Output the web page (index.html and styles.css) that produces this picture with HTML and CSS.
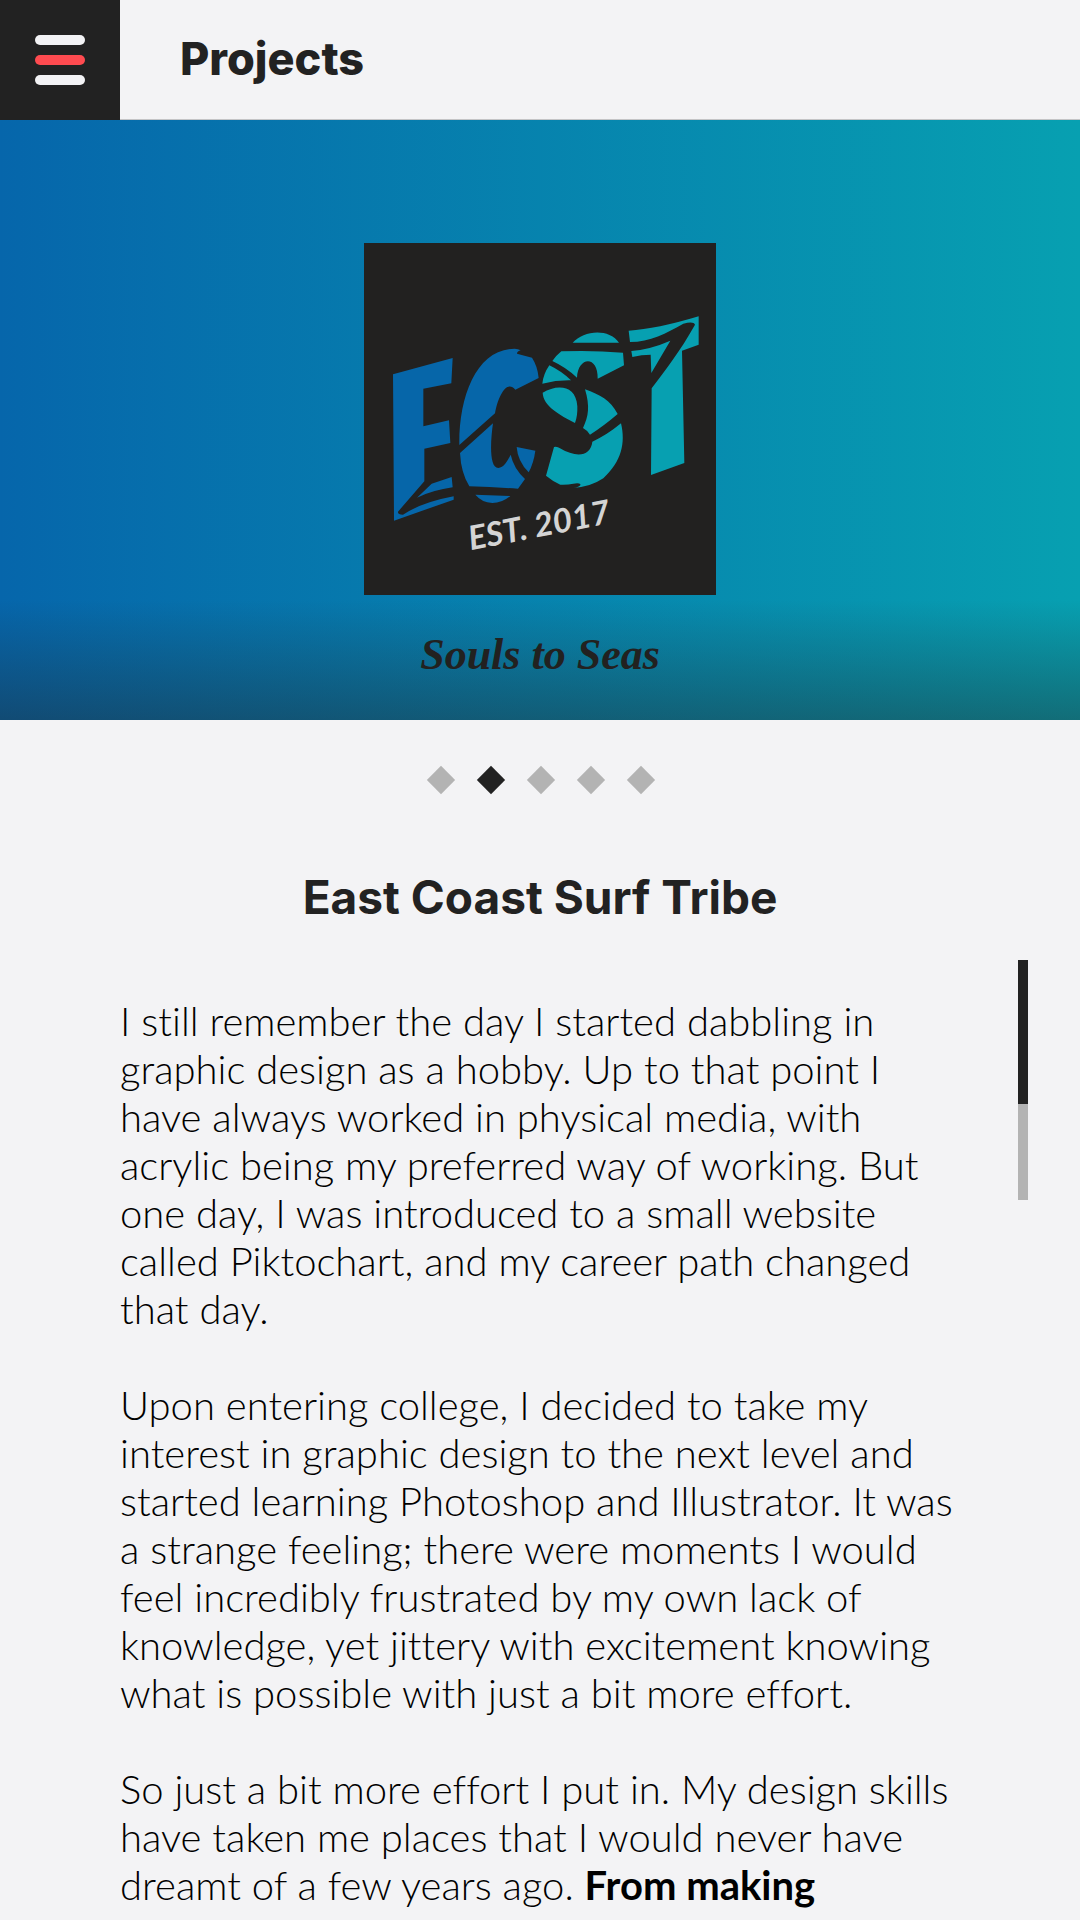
FILE: index.html
```html
<!DOCTYPE html>
<html lang="en">
<head>
<meta charset="utf-8">
<meta name="viewport" content="width=device-width, initial-scale=1">
<title>Projects</title>
<link rel="stylesheet" href="styles.css">
</head>
<body>
<header class="topbar">
  <button class="menu" type="button" aria-label="Open menu">
    <span class="menu-bar"></span>
    <span class="menu-bar menu-bar-accent"></span>
    <span class="menu-bar"></span>
  </button>
  <h1 class="topbar-title">Projects</h1>
</header>
<main>
  <section class="hero">
    <svg class="logo" viewBox="12 10 1056 1056" role="img" aria-label="ECST, established 2017">
      <rect x="12" y="10" width="1056" height="1056" fill="#222120"/>
      <g fill="#0666a9">
        <path d="M99 404L278 355L274 431L190 447V560L267 542L271 610L193 627V725L114 816Q112 824 129 825Q185 788 281 770V780L102 843Z"/>
        <path d="M171 774L215 732Q246 722 275 712L278 743Q220 751 171 774Z"/>
        <path d="M298 616C296 470 350 327 464 327Q474 327 482 332Q472 334 471 342L516 354Q533 380 536 415L466 450C440 418 414 470 405 521Z"/>
        <path d="M300 640L399 551C392 600 386 685 415 685C432 685 446 658 452 645Q461 686 495 718L474 747Q400 742 328 740Q303 700 300 640Z"/>
        <path d="M470 622L526 633Q521 670 506 698Q473 665 470 622Z"/>
        <path d="M346 765L451 769Q426 790 397 790Q365 788 346 765Z"/>
      </g>
      <g fill="#07a0b1">
        <path d="M638 309C670 273 745 264 777 309Z"/>
        <path d="M577 364Q590 346 604 335Q695 331 789 339L792 377L713 417C715 345 653 350 651 414Q618 383 577 364Z"/>
        <path d="M568 377Q604 394 633 422Q590 421 547 432Q550 403 568 377Z"/>
        <path d="M548 459C590 434 648 434 652 500Q653 530 645 550C600 526 550 500 548 459Z"/>
        <path d="M675 449C720 466 750 480 773 523Q730 560 690 585Q682 572 669 565C686 530 690 500 675 449Z"/>
        <path d="M697 606Q741 586 783 551C797 610 785 665 730 716Q690 743 638 745Q659 742 662 735Q658 728 640 732Q622 736 601 735Q577 724 558 708L582 622Q592 620 600 626C650 655 692 650 697 606Z"/>
        <path d="M806 273Q890 268 1016 230V315L966 333L973 670L873 706L875 446C920 386 960 335 1005 255Q1001 243 970 252C920 280 870 307 810 307Z"/>
        <path d="M814 334Q872 329 931 303L874 400L872 345Q845 345 817 352Z"/>
      </g>
      <text class="logo-est" transform="translate(332 932) rotate(-11)">EST. 2017</text>
    </svg>
    <p class="hero-tagline">Souls to Seas</p>
  </section>
  <nav class="pager" aria-label="Projects">
    <button class="pager-dot" type="button" aria-label="Project 1"></button>
    <button class="pager-dot pager-dot-active" type="button" aria-label="Project 2" aria-current="true"></button>
    <button class="pager-dot" type="button" aria-label="Project 3"></button>
    <button class="pager-dot" type="button" aria-label="Project 4"></button>
    <button class="pager-dot" type="button" aria-label="Project 5"></button>
  </nav>
  <article class="project">
    <h2 class="project-title">East Coast Surf Tribe</h2>
    <div class="project-body">
      <div class="project-text">
        <p>I still remember the day I started dabbling in graphic design as a hobby. Up to that point I have always worked in physical media, with acrylic being my preferred way of working. But one day, I was introduced to a small website called Piktochart, and my career path changed that day.</p>
        <p>Upon entering college, I decided to take my interest in graphic design to the next level and started learning Photoshop and Illustrator. It was a strange feeling; there were moments I would feel incredibly frustrated by my own lack of knowledge, yet jittery with excitement knowing what is possible with just a bit more effort.</p>
        <p>So just a bit more effort I put in. My design skills have taken me places that I would never have dreamt of a few years ago. <strong>From making</strong></p>
      </div>
      <div class="scroll-track"><div class="scroll-thumb"></div></div>
    </div>
  </article>
</main>
</body>
</html>
```
FILE: styles.css
```css
* {
  box-sizing: border-box;
}

body {
  margin: 0;
  background: #f3f3f5;
  color: #222;
  font-family: Lato, "Liberation Sans", sans-serif;
  font-variant-ligatures: none;
}

h1, h2, p {
  margin: 0;
}

h1, h2 {
  font-family: Inter, "Liberation Sans", sans-serif;
  line-height: 60px;
}

button {
  border: 0;
  padding: 0;
  cursor: pointer;
}

.topbar {
  display: flex;
  height: 120px;
}

.menu {
  display: flex;
  flex-direction: column;
  align-items: center;
  justify-content: center;
  gap: 10px;
  width: 120px;
  background: #222;
}

.menu-bar {
  width: 50px;
  height: 10px;
  border-radius: 5px;
  background: #f3f3f5;
}

.menu-bar-accent {
  background: #ff4b50;
}

.topbar-title {
  flex: 1;
  padding: 29px 60px 0;
  border-bottom: 1px solid #c4c4c6;
  font-size: 45px;
  font-weight: 800;
}

.hero {
  display: flex;
  flex-direction: column;
  align-items: center;
  height: 600px;
  padding-top: 123px;
  background:
    linear-gradient(to top, rgba(34, 34, 34, 0.4), rgba(34, 34, 34, 0) 120px),
    linear-gradient(to right, #0666ab, #07a0b1);
}

.logo {
  width: 352px;
  height: 352px;
}

.logo-est {
  fill: #d4d4d4;
  font: italic 700 100px Lato, sans-serif;
}

.hero-tagline {
  margin-top: 32px;
  color: #222120;
  font: italic 700 44px/56px "Liberation Serif", serif;
}

.pager {
  display: flex;
  justify-content: center;
  gap: 30px;
  padding: 50px 0 50px 2px;
}

.pager-dot {
  width: 20px;
  height: 20px;
  background: #b3b3b3;
  transform: rotate(45deg);
}

.pager-dot-active {
  background: #222;
}

.project {
  padding: 27px 52px 0 120px;
}

.project-title {
  padding-right: 68px;
  text-align: center;
  font-size: 46px;
  font-weight: 700;
}

.project-body {
  display: flex;
  justify-content: space-between;
  gap: 58px;
  margin-top: 33px;
}

.project-text {
  display: flex;
  flex: 1;
  flex-direction: column;
  gap: 48px;
  padding-top: 37px;
  color: #000;
  font-size: 40px;
  line-height: 48px;
  font-weight: 300;
}

.project-text strong {
  font-weight: 700;
}

.scroll-track {
  width: 10px;
  height: 240px;
  background: #b3b3b3;
}

.scroll-thumb {
  height: 60%;
  background: #222;
}
```
